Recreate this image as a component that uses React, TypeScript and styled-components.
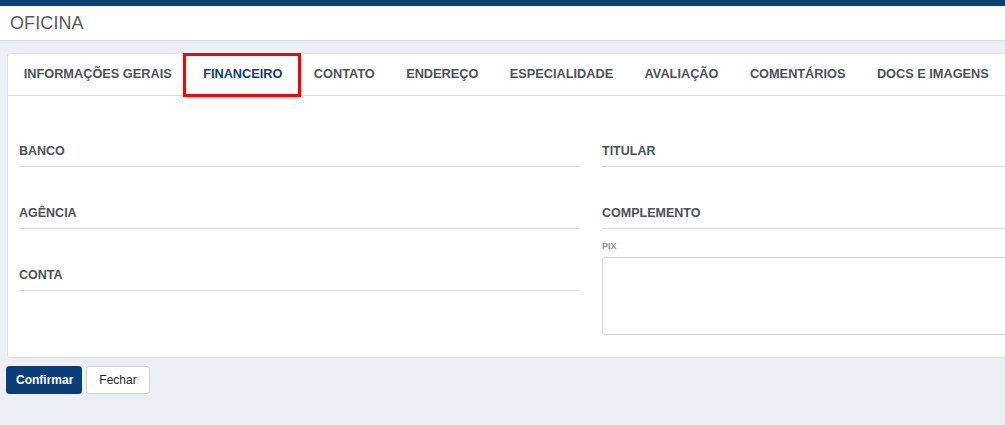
import React from "react";
import styled, { createGlobalStyle } from "styled-components";

const GlobalStyle = createGlobalStyle`
  html, body {
    margin: 0;
    padding: 0;
    background: #eeeef7;
    overflow: hidden;
  }
  body {
    font-family: "Liberation Sans", Arial, sans-serif;
    min-height: 100vh;
  }
`;

const brand = "#0b3d78";

const Page = styled.div`
  display: flex;
  flex-direction: column;
  min-height: 100vh;
  border-top: 6px solid ${brand};
  box-sizing: border-box;
`;

const Header = styled.header`
  height: 34px;
  display: flex;
  align-items: center;
  padding-left: 10px;
  background: #fff;
  border-bottom: 1px solid #dcdce4;
  font-size: 18px;
  color: #5a5a5a;
  letter-spacing: 0.1px;
`;

const Content = styled.main`
  display: flex;
  flex-direction: column;
  padding: 12px 0 0 6px;
`;

const Panel = styled.section`
  width: 1167px;
  margin-left: 1px;
  background: #fff;
  border: 1px solid #dcdce2;
  border-radius: 3px;
  box-sizing: border-box;
`;

const TabList = styled.nav`
  display: flex;
  height: 41px;
  box-sizing: content-box;
  border-bottom: 1px solid #dedede;
`;

const Tab = styled.div<{ $active?: boolean }>`
  position: relative;
  display: flex;
  align-items: center;
  padding: 0 15.7px 2px;
  font-size: 12.75px;
  font-weight: 700;
  white-space: nowrap;
  color: ${(p) => (p.$active ? brand : "#4e5156")};

  ${(p) =>
    p.$active &&
    `
    &::after {
      content: "";
      position: absolute;
      top: -1px;
      left: -4px;
      right: -3px;
      bottom: -2px;
      border: 3px solid #ff0000;
    }
  `}
`;

const Form = styled.div`
  display: grid;
  grid-template-columns: 560px 560px;
  column-gap: 23px;
  padding: 48px 11px 22px;
  align-items: start;
`;

const Column = styled.div`
  display: flex;
  flex-direction: column;
`;

const Field = styled.div<{ $first?: boolean }>`
  margin-top: ${(p) => (p.$first ? "0" : "39px")};
  padding-bottom: 7px;
  border-bottom: 1px solid #dadada;
  font-size: 12.5px;
  line-height: 15px;
  font-weight: 700;
  color: #4e5156;
`;

const SmallLabel = styled.label`
  margin-top: 12px;
  font-size: 9px;
  line-height: 11px;
  font-weight: 700;
  color: #8c8c8c;
`;

const TextArea = styled.textarea`
  margin-top: 5px;
  height: 78px;
  box-sizing: border-box;
  border: 1px solid #d2d2d2;
  border-radius: 3px;
  resize: none;
  font-family: inherit;
  outline: none;
`;

const Actions = styled.div`
  display: flex;
  gap: 4px;
  margin-top: 8px;
`;

const Button = styled.button<{ $primary?: boolean }>`
  height: 28px;
  box-sizing: border-box;
  border-radius: 3px;
  font-family: "Liberation Sans", Arial, sans-serif;
  font-size: 12px;
  cursor: pointer;
  padding: ${(p) => (p.$primary ? "0 8px 0 9px" : "0 12px")};
  font-weight: ${(p) => (p.$primary ? 700 : 400)};
  color: ${(p) => (p.$primary ? "#fff" : "#1e1e1e")};
  background: ${(p) => (p.$primary ? brand : "#fff")};
  border: 1px solid ${(p) => (p.$primary ? brand : "#cfcfcf")};
`;

const tabs = [
  "INFORMAÇÕES GERAIS",
  "FINANCEIRO",
  "CONTATO",
  "ENDEREÇO",
  "ESPECIALIDADE",
  "AVALIAÇÃO",
  "COMENTÁRIOS",
  "DOCS E IMAGENS",
];

export default function App() {
  return (
    <>
      <GlobalStyle />
      <Page>
        <Header>OFICINA</Header>
        <Content>
          <Panel>
            <TabList>
              {tabs.map((t) => (
                <Tab key={t} $active={t === "FINANCEIRO"}>
                  {t}
                </Tab>
              ))}
            </TabList>
            <Form>
              <Column>
                <Field $first>BANCO</Field>
                <Field>AGÊNCIA</Field>
                <Field>CONTA</Field>
              </Column>
              <Column>
                <Field $first>TITULAR</Field>
                <Field>COMPLEMENTO</Field>
                <SmallLabel>PIX</SmallLabel>
                <TextArea />
              </Column>
            </Form>
          </Panel>
          <Actions>
            <Button $primary>Confirmar</Button>
            <Button>Fechar</Button>
          </Actions>
        </Content>
      </Page>
    </>
  );
}
